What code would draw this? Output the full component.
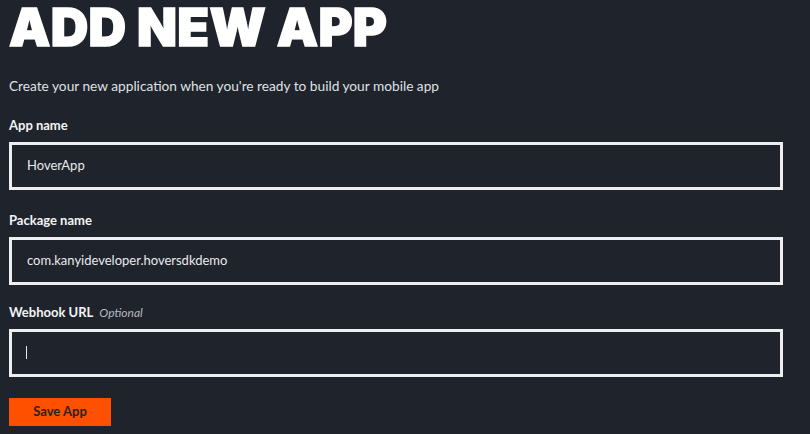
export default function App() {
  const labelCls = 'block text-[13px] font-bold text-[#f3f4f6] leading-none'
  const boxCls = 'flex items-center h-[48px] w-[774px] border-[3px] border-[#eeeef0] bg-[#1f232b] px-[15px] text-[13px] text-[#e8e9ec]'

  return (
    <div
      className="w-[810px] h-[434px] overflow-hidden bg-[#1f232b] px-[9px]"
      style={{ fontFamily: 'Lato, "Noto Sans", sans-serif' }}
    >
      {/* Title */}
      <h1
        className="text-[52px] font-black text-white leading-none tracking-[0.3px] pt-[2px] pb-[4px]"
        style={{ fontFamily: 'Inter, "Noto Sans", sans-serif', WebkitTextStroke: '1.5px white' }}
      >
        ADD NEW APP
      </h1>

      <p className="mt-[21px] text-[13.7px] text-[#dfe1e5] leading-none">
        Create your new application when you're ready to build your mobile app
      </p>

      <form className="mt-[26px]">
        <label className={labelCls}>App name</label>
        <div className={`${boxCls} mt-[10px]`}>HoverApp</div>

        <label className={`${labelCls} mt-[24px]`}>Package name</label>
        <div className={`${boxCls} mt-[10px]`}>com.kanyideveloper.hoversdkdemo</div>

        <label className={`${labelCls} mt-[21px]`}>
          Webhook URL
          <span className="ml-[6px] font-normal italic text-[12px] text-[#b5b9c0]">Optional</span>
        </label>
        <div className={`${boxCls} mt-[10px]`}>
          <span className="block w-px h-[13px] bg-[#e8e9ec] ml-[-1px]" />
        </div>

        <button
          type="button"
          className="mt-[21px] h-[28px] w-[102px] bg-[#ff5000] text-[13px] font-bold text-[#2b2320]"
        >
          Save App
        </button>
      </form>
    </div>
  )
}
